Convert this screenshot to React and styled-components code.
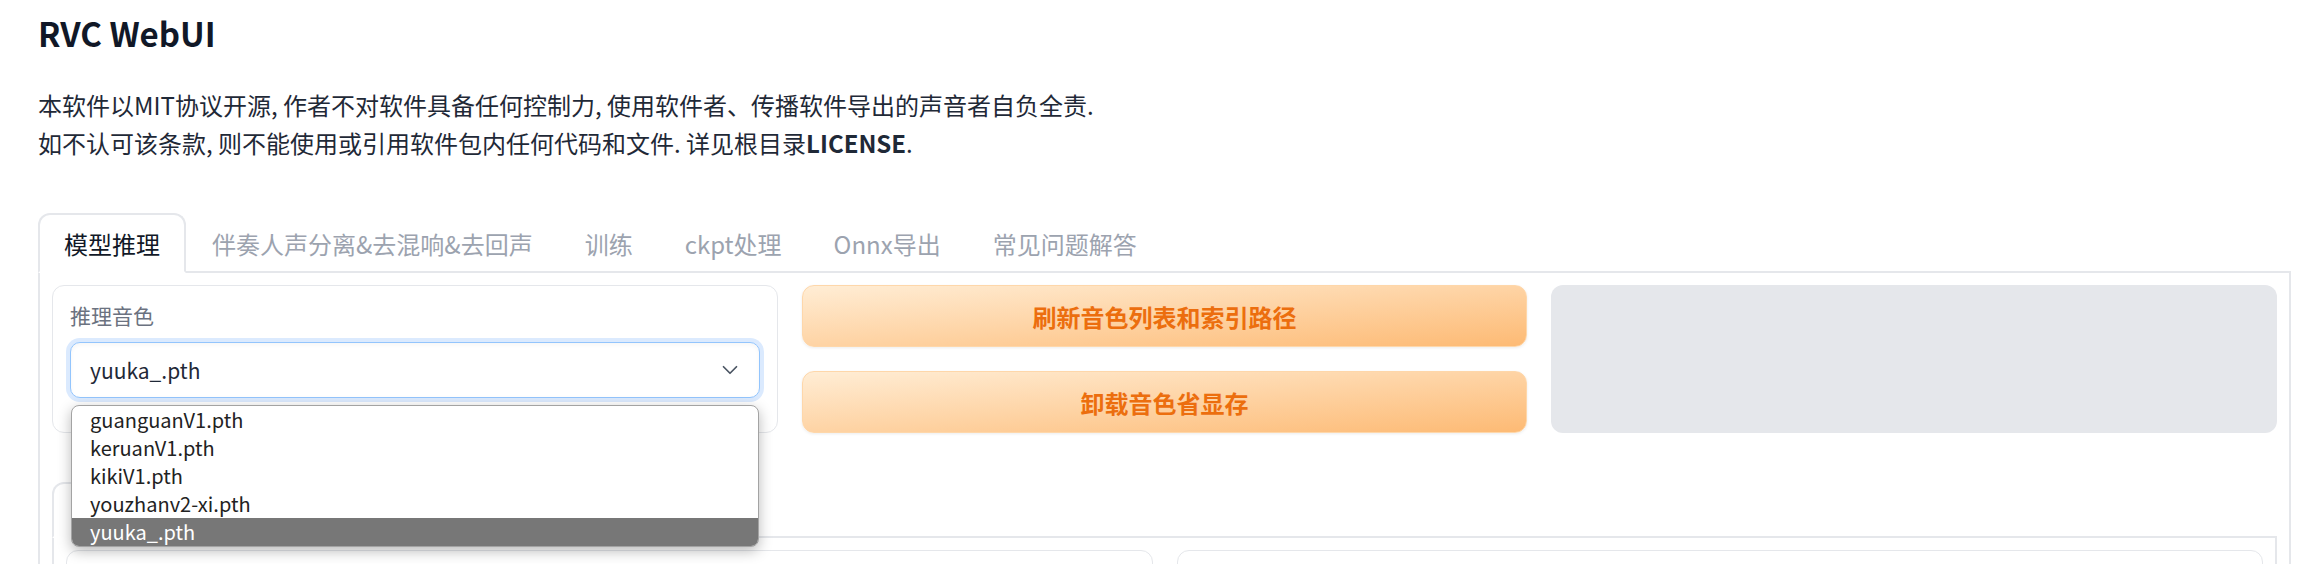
import React from 'react';
import styled, { createGlobalStyle } from 'styled-components';
import { ChevronDown } from 'lucide-react';

const GlobalStyle = createGlobalStyle`
    html, body {
        margin: 0;
        padding: 0;
        background: #ffffff;
        overflow: hidden;
    }
    body {
        font-family: "Noto Sans CJK SC", "Noto Sans", sans-serif;
        color: #1f2937;
    }
`;

const Page = styled.div`
    padding: 13px 20px 0 38px;
`;

const Title = styled.h2`
    margin: 0;
    font-size: 33px;
    line-height: 40px;
    font-weight: 700;
    color: #111827;
`;

const Prose = styled.p`
    margin: 33px 0 0;
    font-size: 24px;
    line-height: 38px;
    color: #1f2937;

    strong {
        font-weight: 700;
    }
`;

const Tabs = styled.div`
    margin-top: ${(props) => props.offset || 0}px;
    display: flex;
    flex-direction: column;
`;

const TabNav = styled.div`
    display: flex;
    border-bottom: 2px solid #e5e7eb;
`;

const TabButton = styled.div`
    height: 56px;
    padding: 0 24px;
    margin-bottom: -2px;
    display: flex;
    align-items: center;
    font-size: 24px;
    white-space: nowrap;
    border: 2px solid ${(props) => (props.active ? '#e5e7eb' : 'transparent')};
    border-bottom-color: ${(props) => (props.active ? '#ffffff' : 'transparent')};
    border-radius: 12px 12px 0 0;
    background: ${(props) => (props.active ? '#ffffff' : 'transparent')};
    color: ${(props) => (props.active ? '#111827' : '#9ca3af')};
    ${(props) => props.width && `width: ${props.width}px; box-sizing: border-box;`}
`;

const TabPanel = styled.div`
    border: 2px solid #e5e7eb;
    border-top: none;
    padding: 12px;
    display: flex;
    flex-direction: column;
`;

const Row = styled.div`
    display: grid;
    grid-template-columns: repeat(${(props) => props.cols}, 1fr);
    gap: 24px;
`;

const Block = styled.div`
    position: relative;
    border: 1px solid #e5e7eb;
    border-radius: 12px;
    background: #ffffff;
    padding: 15px 17px;
    min-height: ${(props) => props.minHeight || 0}px;
`;

const Label = styled.div`
    font-size: 21px;
    line-height: 28px;
    color: #6b7280;
    margin-bottom: 13px;
`;

const SelectWrap = styled.div`
    position: relative;
`;

const SelectBox = styled.div`
    height: 56px;
    box-sizing: border-box;
    display: flex;
    align-items: center;
    justify-content: space-between;
    padding: 0 16px 0 19px;
    border: 1.5px solid #93c5fd;
    border-radius: 10px;
    box-shadow: 0 0 0 4px #dbeafe, inset 0 2px 4px rgba(0, 0, 0, 0.04);
    font-size: 21px;
    color: #1f2937;
    background: #ffffff;
`;

const Popup = styled.div`
    position: absolute;
    top: calc(100% + 7px);
    left: 1px;
    right: 1px;
    height: 140px;
    overflow: hidden;
    background: #ffffff;
    border: 1px solid #a3a3a3;
    border-radius: 8px;
    box-shadow: 0 4px 14px rgba(0, 0, 0, 0.28);
    z-index: 10;
`;

const Option = styled.div`
    height: 28px;
    line-height: 28px;
    padding-left: 18px;
    font-size: 20px;
    color: ${(props) => (props.selected ? '#ffffff' : '#222222')};
    background: ${(props) => (props.selected ? '#777777' : 'transparent')};
`;

const ButtonColumn = styled.div`
    display: flex;
    flex-direction: column;
    gap: 24px;
`;

const PrimaryButton = styled.button`
    flex: 1;
    min-height: 62px;
    border: 1px solid #fed7aa;
    border-radius: 12px;
    background: linear-gradient(to bottom right, #ffedd5, #fdba74);
    box-shadow: 0 1px 3px rgba(0, 0, 0, 0.08);
    color: #ec6e0e;
    font-family: inherit;
    font-size: 24px;
    font-weight: 700;
    cursor: pointer;
`;

const EmptyPanel = styled.div`
    background: #e5e7eb;
    border-radius: 12px;
`;

const models = ['guanguanV1.pth', 'keruanV1.pth', 'kikiV1.pth', 'youzhanv2-xi.pth', 'yuuka_.pth'];

const tabs = ['模型推理', '伴奏人声分离&去混响&去回声', '训练', 'ckpt处理', 'Onnx导出', '常见问题解答'];

const App = () => {
    return (
        <>
            <GlobalStyle />
            <Page>
                <Title>RVC WebUI</Title>
                <Prose>
                    本软件以MIT协议开源, 作者不对软件具备任何控制力, 使用软件者、传播软件导出的声音者自负全责.
                    <br />
                    如不认可该条款, 则不能使用或引用软件包内任何代码和文件. 详见根目录<strong>LICENSE</strong>.
                </Prose>
                <Tabs offset={51}>
                    <TabNav>
                        {tabs.map((t, i) => (
                            <TabButton key={t} active={i === 0}>{t}</TabButton>
                        ))}
                    </TabNav>
                    <TabPanel>
                        <Row cols={3}>
                            <Block>
                                <Label>推理音色</Label>
                                <SelectWrap>
                                    <SelectBox>
                                        <span>yuuka_.pth</span>
                                        <ChevronDown size={26} strokeWidth={1.6} color="#4b5563" />
                                    </SelectBox>
                                    <Popup>
                                        {models.map((m) => (
                                            <Option key={m} selected={m === 'yuuka_.pth'}>{m}</Option>
                                        ))}
                                    </Popup>
                                </SelectWrap>
                            </Block>
                            <ButtonColumn>
                                <PrimaryButton>刷新音色列表和索引路径</PrimaryButton>
                                <PrimaryButton>卸载音色省显存</PrimaryButton>
                            </ButtonColumn>
                            <EmptyPanel />
                        </Row>
                        {/* nested tabs: their labels sit under the open dropdown */}
                        <Tabs offset={49}>
                            <TabNav>
                                <TabButton active width={148} />
                                <TabButton width={148} />
                            </TabNav>
                            <TabPanel>
                                <Row cols={2}>
                                    <Block minHeight={200} />
                                    <Block minHeight={200} />
                                </Row>
                            </TabPanel>
                        </Tabs>
                    </TabPanel>
                </Tabs>
            </Page>
        </>
    );
};

export default App;
